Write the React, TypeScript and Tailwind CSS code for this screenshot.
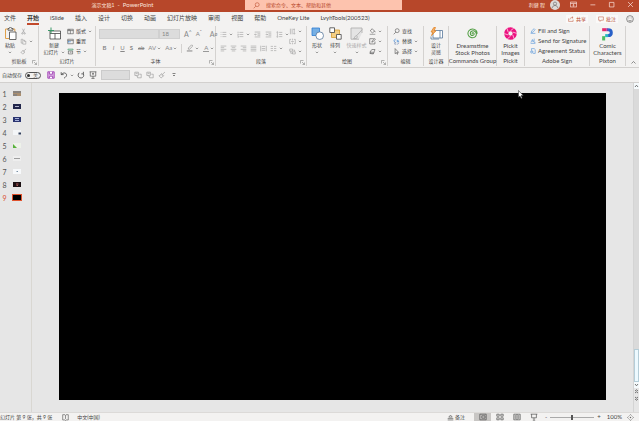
import { type ReactNode } from "react";
import clsx from "clsx";

interface IconProps {
  children: ReactNode;
  size?: string;
  box?: string;
  className?: string;
}

/** Small stroked drawing. The view box defaults to a 10-unit square. */
function Icon({ children, size = "size-[10px]", box = "0 0 10 10", className }: IconProps) {
  return (
    <svg
      viewBox={box}
      aria-hidden="true"
      fill="none"
      stroke="currentColor"
      strokeWidth="0.8"
      className={clsx("shrink-0", size, className)}
    >
      {children}
    </svg>
  );
}

function Chevron() {
  return (
    <Icon size="h-[3px] w-[4px]" box="0 0 4 3" className="text-[#888]">
      <path d="M.8.8 2 2 3.2.8" />
    </Icon>
  );
}

const glyphs = {
  cut: <path d="M3.4 1 6.3 7M6.6 1 3.7 7M2.4 7.8a1 1 0 1 0 2 0 1 1 0 1 0-2 0M5.6 7.8a1 1 0 1 0 2 0 1 1 0 1 0-2 0" />,
  copy: <path d="M4 3V1.8H1.7v5.5H4M4 3.2h2.6L8.3 5v3.8H4zM6.4 3.3V5h1.8" />,
  brush: <path d="M8.7 1.3 5.8 4M4.5 3.2l2.6 2.6-.8.8-2.6-2.6zM3.8 4.2C3 5.3 2.2 5.7 1.2 6l2.7 2.7c1.1-.5 1.8-1.3 2.3-2.2" />,
  layout: <path d="M1 1.8h8v6.4H1zM1 3.7h8M4.8 3.7v4.5M1.8 2.7h3" />,
  reset: <><path d="M1 1.8h8v6.4H1zM1 3.7h8" /><path stroke="#2b7cd3" d="M3 6.5 1.7 5.4 3 4.5M2 5.4h3.6" /></>,
  section: <><path d="M2 4.2h6v4.3H2zM4 6h2.4" /><path stroke="#3a9a68" d="M1.3 1.5h7.4v1.3H1.3z" /></>,
  bullets: <path d="M1 2h1M1 5h1M1 8h1M3.5 2H9M3.5 5H9M3.5 8H9" />,
  numbers: <path d="M1.5 1v2M1 4.5h1L1 6h1M1 7.5h1v1.5H1M3.5 2H9M3.5 5H9M3.5 8H9" />,
  outdent: <path d="M1 1.5h8M5 4h4M5 6h4M1 8.5h8M3.8 5H1M2.2 3.8 1 5l1.2 1.2" />,
  indent: <path d="M1 1.5h8M5 4h4M5 6h4M1 8.5h8M1 5h2.8M2.6 3.8 3.8 5 2.6 6.2" />,
  spacing: <path d="M2 1v8M1 2l1-1 1 1M1 8l1 1 1-1M4.5 2H9M4.5 5H9M4.5 8H9" />,
  left: <path d="M1 1.5h8M1 3.8h5M1 6.2h8M1 8.5h5" />,
  center: <path d="M1 1.5h8M2.5 3.8h5M1 6.2h8M2.5 8.5h5" />,
  right: <path d="M1 1.5h8M4 3.8h5M1 6.2h8M4 8.5h5" />,
  justify: <path d="M1 1.5h8M1 3.8h8M1 6.2h8M1 8.5h8" />,
  distribute: <path d="M1 1v8M9 1v8M2.5 2h5M2.5 5h5M2.5 7.5h5" />,
  columns: <path d="M1 2h3.3M1 5h3.3M1 8h3.3M5.7 2H9M5.7 5H9M5.7 8H9" />,
  direction: <path d="M2 1v8M4.5 1v8M7.5 1v7.8M6.2 7.5l1.3 1.3 1.3-1.3M6 2h2" />,
  alignBox: <path d="M3 2H1v6h2M7 2h2v6H7M5 1v2.5M5 6.5V9M3 5h4" />,
  smartArt: <path d="M1 1.5h4v3H1zM2.5 4.5v3H5M5 5.5h4v3H5zM6 3h2v2" />,
  fill: <><path d="M4.5 1 8 4.5 4.8 7 1.8 4zM8 4.5 9 6" /><path strokeWidth="1.3" stroke="#999" d="M1 9h8" /></>,
  outline: <path d="M7 1H1v7.5h7.5V5M4 6l.5-1.7L8.3.8l1 1L5.6 5.5z" />,
  effects: <><path d="m2 5 2-2.8h4.6L7 6.2H2.6z" /><path fill="#aaa" d="M2 5 1.3 7.8l4.8.7L7.3 6" /></>,
  find: <><circle cx="6" cy="3.8" r="2.8" /><path d="M4 6 1 9" /></>,
  replace: <><path stroke="#2b7cd3" d="M4 1.5C2 1.5 1.5 3 2 5M.8 3.8 2 5l1.2-1.2M6 2.5v3M6 4h2v1.5H6" /><path stroke="#5d78a8" d="M5.5 8.8c2 0 2.8-.8 2.8-2.3M4.5 6.5h-2v2.3h2" /></>,
  select: <path d="M3 .8v7.4l1.8-1.6L6 9l1-.5-1.2-2.3H8z" />,
  fillSign: <path stroke="#2b7cd3" d="M1 9h8M2 7.5l1-3 4-3.3 1.5 1.6L5 7z" />,
  sendSign: <path stroke="#2b7cd3" d="M1 9h8M1.5 7.5 4 2.5l1 3.8 1.3-2 .8 3H9M7 1v3.5" />,
  status: <path stroke="#2b7cd3" d="M2.5 4V1H7l1.7 1.7V9H5M1 6.5a2 2 0 1 0 4 0 2 2 0 1 0-4 0M3 5.5v1h1" />,
  undo: <path strokeWidth="1" d="M1.5 1.5v3h3M1.7 4.3C4 1.8 7 1.8 8 4c.8 2-.6 3.5-3 5" />,
  redo: <path strokeWidth="1" d="M8 1v2.6H5.4M2.7 2.2C.8 4 1 7.3 3.4 8.4s5-.4 5-3.1L8 3.7" />,
  present: <path d="M.8 1h8.4M1.6 1v5.5h6.8V1M5 6.5v2.7M3 9.2h4M5 2.2v2.6M3.8 3.5h2.4" />,
  pasteStyle: <path d="M1 1.5h4.5v4H1zM4.5 6.5V8.500H9V4H6.5M2 3h2.500M2.5 5.5 4 7.200" />,
};

type GlyphName = keyof typeof glyphs;

interface ToolProps {
  glyph: GlyphName;
  label: string;
  text?: boolean;
  menu?: boolean;
  muted?: boolean;
  size?: string;
  className?: string;
}

/** Icon button with an optional visible caption and menu arrow. */
function Tool({ glyph, label, text, menu, muted, size = "size-[7px]", className }: ToolProps) {
  return (
    <button
      type="button"
      aria-label={label}
      className={clsx(
        "flex h-[10px] shrink-0 items-center gap-[2px] whitespace-nowrap",
        muted ? "text-[#999]" : "text-[#444]",
        className,
      )}
    >
      <Icon size={size}>{glyphs[glyph]}</Icon>
      {text && <span>{label}</span>}
      {menu && <Chevron />}
    </button>
  );
}

interface BigButtonProps {
  icon: ReactNode;
  lines: string[];
  menu?: "below" | "inline";
  muted?: boolean;
  className?: string;
}

function BigButton({ icon, lines, menu, muted, className }: BigButtonProps) {
  return (
    <button
      type="button"
      className={clsx(
        "flex shrink-0 flex-col items-center whitespace-nowrap leading-[7px]",
        muted ? "text-[#aaa]" : "text-[#444]",
        className,
      )}
    >
      <span className="mb-px flex h-[15px] items-center">{icon}</span>
      {lines.map((line, i) => (
        <span key={line} className="flex items-center gap-[2px]">
          {line}
          {menu === "inline" && i === lines.length - 1 && <Chevron />}
        </span>
      ))}
      {menu === "below" && (
        <span className="flex h-[7px] items-center">
          <Chevron />
        </span>
      )}
    </button>
  );
}

interface GroupProps {
  label: string;
  width: string;
  launcher?: boolean;
  /** Latin captions are set one step larger than the Chinese ones. */
  latin?: boolean;
  children: ReactNode;
}

function Group({ label, width, launcher, latin, children }: GroupProps) {
  return (
    <section
      aria-label={label}
      className={clsx(
        "relative flex shrink-0 flex-col border-r border-[#d4d2d0]",
        latin ? "text-[6px]" : "text-[5px]",
        width,
      )}
    >
      <div className="flex h-[31px] justify-center">{children}</div>
      <div className="flex justify-center leading-[10px] whitespace-nowrap text-[#444]">{label}</div>
      {launcher && (
        <button type="button" aria-label={`${label} 设置`} className="absolute right-px bottom-px text-[#888]">
          <Icon size="size-[5px]">
            <path strokeWidth="1.2" d="M1 7V1h6M4 4l5 5M9 5v4H5" />
          </Icon>
        </button>
      )}
    </section>
  );
}

const tabs = ["文件", "开始", "iSlide", "插入", "设计", "切换", "动画", "幻灯片放映", "审阅", "视图", "帮助", "OneKey Lite", "LvyhTools(200523)"];

function TitleBar() {
  return (
    <header className="flex h-[12px] items-center bg-[#b7472a] pb-[3px] text-[#fbe3dc]">
      <h1 className="w-[245px] shrink-0 text-center whitespace-nowrap">
        <span className="text-[5px]">演示文稿1</span>&nbsp; -&nbsp; PowerPoint
      </h1>
      <label className="flex h-[10px] max-w-[157px] flex-1 items-center gap-[6px] self-start bg-[#fdc3ae] pl-[8px] text-[#b7472a]">
        <Icon size="size-[7px]">{glyphs.find}</Icon>
        <input
          type="search"
          aria-label="搜索"
          placeholder="搜索命令、文本、帮助和其他"
          className="min-w-0 flex-1 bg-transparent text-[5px] leading-[8px] outline-none placeholder:text-[#b7472a]"
        />
      </label>
      <span className="ml-auto text-[5px] whitespace-nowrap">利健 程</span>
      <span className="ml-[5px] flex size-[10px] shrink-0 items-center justify-center rounded-full bg-[#dedad8] text-[#666]">
        <Icon size="size-[8px]">
          <circle cx="5" cy="3.3" r="2" />
          <path d="M1.5 9c0-4.5 7-4.5 7 0" />
        </Icon>
      </span>
      <div className="ml-[10px] flex gap-[12px] pr-[5px]">
        <button type="button" aria-label="功能区显示选项">
          <Icon size="size-[7px]">
            <path strokeWidth="1" d="M.5 1.5h9v7h-9zM.5 3.5h9M5 8V5M3.7 6 5 4.8 6.3 6" />
          </Icon>
        </button>
        <button type="button" aria-label="最小化">
          <Icon size="size-[7px]"><path strokeWidth="1" d="M2 5.5h7" /></Icon>
        </button>
        <button type="button" aria-label="最大化">
          <Icon size="size-[7px]"><path strokeWidth="1" d="M2 2h6.5v6.5H2z" /></Icon>
        </button>
        <button type="button" aria-label="关闭">
          <Icon size="size-[7px]"><path strokeWidth="1" d="m1.5 1.5 7 7M8.5 1.5l-7 7" /></Icon>
        </button>
      </div>
    </header>
  );
}

function TabRow() {
  return (
    <nav aria-label="功能区" className="flex h-[13px] items-stretch pl-[4px]">
      <ul className="flex gap-[11px]">
        {tabs.map((tab) => (
          <li key={tab} className="flex">
            <a
              href="#"
              aria-current={tab === "开始" ? "page" : undefined}
              className={clsx(
                "border-b-2 leading-[12px] whitespace-nowrap",
                tab === "开始" ? "border-[#c2492b] font-bold text-[#333]" : "border-transparent",
              )}
            >
              {tab}
            </a>
          </li>
        ))}
      </ul>
      <div className="ml-auto flex items-center gap-[8px] pr-[5px] text-[5px] text-[#b7472a]">
        <button type="button" className="flex items-center gap-[2px] bg-[#faf9f8] px-[2px] leading-[8px]">
          <Icon size="size-[6px]"><path d="M1 4v5h7.5V6M3 6c.5-3 2.5-3.5 5-3.5M6.5.8l2 1.700-2 1.800" /></Icon>
          共享
        </button>
        <button type="button" className="flex items-center gap-[2px] bg-[#faf9f8] px-[2px] leading-[8px]">
          <Icon size="size-[6px]"><path d="M1 1.5h8V7H5L3.5 9V7H1z" /></Icon>
          批注
        </button>
        <button type="button" aria-label="反馈" className="text-[#555]">
          <Icon size="size-[8px]">
            <circle cx="5" cy="5" r="4.2" />
            <path d="M3.5 3.2v1M6.5 3.2v1M2.8 6c1 2 3.4 2 4.4 0" />
          </Icon>
        </button>
      </div>
    </nav>
  );
}

function Divider() {
  return <span className="h-[9px] w-px bg-[#d4d2d0]" />;
}

function FontGroup() {
  return (
    <Group label="字体" width="w-[120px]" launcher>
      <div className="flex min-w-0 flex-1 flex-col gap-[4px] pt-[3px] pl-[3px] text-[6px] leading-[10px] text-[#888]">
        <div className="flex items-center gap-[4px]">
          <div className="flex">
            <select disabled aria-label="字体" className="h-[10px] w-[60px] appearance-none border border-[#d0d0d0] bg-[#dcdcdc]" />
            <select disabled aria-label="字号" className="h-[10px] w-[21px] appearance-none border border-[#d0d0d0] bg-[#dcdcdc] pl-[2px] leading-[8px]">
              <option>18</option>
            </select>
          </div>
          <button type="button" aria-label="增大字号" className="flex text-[7px]">A<span className="text-[5px] leading-[6px]">^</span></button>
          <button type="button" aria-label="减小字号" className="flex">A<span className="text-[5px] leading-[6px]">ˇ</span></button>
          <Divider />
          <button type="button" aria-label="清除格式" className="flex text-[7px]">A<span className="text-[5px]">ø</span></button>
        </div>
        <div className="flex items-center gap-[4px] pl-[3px]">
          <button type="button" className="w-[5px] font-bold">B</button>
          <button type="button" className="w-[5px] italic">I</button>
          <button type="button" className="w-[5px] underline">U</button>
          <button type="button" className="w-[5px] font-bold">S</button>
          <button type="button" className="line-through">ab</button>
          <button type="button" className="flex items-center gap-px">AV<Chevron /></button>
          <button type="button" className="flex items-center gap-px">Aa<Chevron /></button>
          <Divider />
          <button type="button" aria-label="突出显示" className="flex items-center gap-px">
            <Icon size="size-[8px]">
              <path d="m3 5 4-4 1.5 1.5-4 4H3z" />
              <path strokeWidth="1.3" d="M1 8.7h7" />
            </Icon>
            <Chevron />
          </button>
          <button type="button" aria-label="字体颜色" className="flex items-center gap-px">
            <span className="w-[6px] border-b border-[#999] leading-[7px]">A</span>
            <Chevron />
          </button>
        </div>
      </div>
    </Group>
  );
}

function ParagraphGroup() {
  return (
    <Group label="段落" width="w-[91px]" launcher>
      <div className="flex min-w-0 flex-1 flex-col gap-[4px] pt-[3px] pl-[4px]">
        <div className="flex gap-[4px]">
          <Tool glyph="bullets" label="项目符号" menu muted />
          <Tool glyph="numbers" label="编号" menu muted />
          <Tool glyph="outdent" label="降低级别" muted />
          <Tool glyph="indent" label="提高级别" muted />
          <Tool glyph="spacing" label="行距" menu muted />
        </div>
        <div className="flex gap-[3px]">
          <Tool glyph="left" label="左对齐" muted />
          <Tool glyph="center" label="居中" muted />
          <Tool glyph="right" label="右对齐" muted />
          <Tool glyph="justify" label="两端对齐" muted />
          <Tool glyph="distribute" label="分散对齐" muted />
          <Tool glyph="columns" label="分栏" menu muted />
        </div>
      </div>
      <div className="w-[17px]">
        <Tool glyph="direction" label="文字方向" menu muted />
        <Tool glyph="alignBox" label="对齐文本" menu muted />
        <Tool glyph="smartArt" label="转换为 SmartArt" menu muted />
      </div>
    </Group>
  );
}

function Ribbon() {
  return (
    <div className="flex h-[43px] border-b border-[#d2d0ce] pt-px pb-px">
      <Group label="剪贴板" width="w-[39px]" launcher>
        <BigButton
          lines={["粘贴"]}
          menu="below"
          className="w-[20px]"
          icon={
            <Icon size="size-[13px]" box="0 0 13 13">
              <path stroke="#e0a04a" strokeWidth="1" d="M4 2H1.5v9.5H5M9 2h1.8v2.5" />
              <path d="M4 3.2V1.5h1.2a1.2 1.2 0 0 1 2.4 0H9v1.7z" />
              <path fill="#fff" d="M5.5 5H12v7.5H5.5z" />
            </Icon>
          }
        />
        <div className="w-[18px]">
          <Tool glyph="cut" label="剪切" muted />
          <Tool glyph="copy" label="复制" menu muted />
          <Tool glyph="brush" label="格式刷" muted />
        </div>
      </Group>
      <Group label="幻灯片" width="w-[57px]">
        <BigButton
          lines={["新建", "幻灯片"]}
          menu="inline"
          className="w-[26px]"
          icon={
            <Icon size="size-[13px]" box="0 0 13 13">
              <path fill="#fff" d="M2 4h10.5v8H2z" />
              <path d="M2 6.5h10.5M7 6.5V12" />
              <path stroke="#3a9a68" strokeWidth="1" d="M3 .5v6M0 3.5h6" />
            </Icon>
          }
        />
        <div className="w-[26px]">
          <Tool glyph="layout" label="版式" text menu />
          <Tool glyph="reset" label="重置" text />
          <Tool glyph="section" label="节" text menu />
        </div>
      </Group>
      <FontGroup />
      <ParagraphGroup />
      <Group label="绘图" width="w-[81px]" launcher>
        <BigButton
          lines={["形状"]}
          menu="below"
          className="w-[18px]"
          icon={
            <Icon size="size-[13px]" box="0 0 13 13">
              <path fill="#75afe4" stroke="#2b7cd3" d="M1 1h7.5v7.5H1z" />
              <circle cx="8.700" cy="8.700" r="3.800" fill="#fff" stroke="#57779b" />
            </Icon>
          }
        />
        <BigButton
          lines={["排列"]}
          menu="below"
          className="w-[18px]"
          icon={
            <Icon size="size-[13px]" box="0 0 13 13">
              <path fill="#f5cf83" stroke="#d69a2d" d="M2.5 3h8v7.500h-8z" />
              <path fill="#fff" d="M.8.8h4.700v4.700H.8zM7.500 7.500h4.700v4.700H7.500z" />
            </Icon>
          }
        />
        <BigButton
          lines={["快速样式"]}
          menu="below"
          muted
          className="w-[25px]"
          icon={
            <Icon size="size-[13px]" box="0 0 13 13">
              <path fill="#e4e4e4" d="M9 12.2H1V1h11v5" />
              <path d="M12.3 2.5 6.5 8.8M6.5 8.8c-2 0-1.5 2-3 2.7 2 .5 4 0 3.8-2z" />
            </Icon>
          }
        />
        <div className="w-[17px]">
          <Tool glyph="fill" label="形状填充" menu />
          <Tool glyph="outline" label="形状轮廓" menu />
          <Tool glyph="effects" label="形状效果" menu />
        </div>
      </Group>
      <Group label="编辑" width="w-[36px]">
        <div className="flex-1 pl-[5px]">
          <Tool glyph="find" label="查找" text />
          <Tool glyph="replace" label="替换" text menu />
          <Tool glyph="select" label="选择" text menu />
        </div>
      </Group>
      <Group label="设计器" width="w-[25px]">
        <BigButton
          lines={["设计", "灵感"]}
          icon={
            <Icon size="size-[13px]" box="0 0 13 13">
              <path fill="#fff" stroke="#57779b" d="M3 3.5h9.5V11H3zM10 3.5V11M1 9.5V12h8" />
              <path fill="#f7b267" stroke="#e08428" d="M3.8.5 1 5h2L1.5 8.5 6 3.800H4L5.500.5z" />
            </Icon>
          }
        />
      </Group>
      <Group label="Commands Group" width="w-[48px]" latin>
        <BigButton
          lines={["Dreamstime", "Stock Photos"]}
          icon={
            <Icon size="size-[11px]" box="0 0 12 12" className="text-[#4d9c3f]">
              <path
                strokeWidth="1.1"
                d="M6.200 6.500C5.500 6.600 5.300 5.500 6.200 5.200 7.500 4.800 8.300 6.500 7.300 7.600 6 9 3.700 8 3.600 6.100 3.500 3.700 6 2.500 8 3.300c2.700 1.200 2.800 4.700.8 6.300C6.200 11.600 2.300 10.600 1.300 7.500.2 4 2.800 1 6 1c3.200 0 5.200 2.500 5 5.200"
              />
            </Icon>
          }
        />
      </Group>
      <Group label="Pickit" width="w-[28px]" latin>
        <BigButton
          lines={["Pickit", "Images"]}
          icon={
            <Icon size="size-[13px]" box="0 0 12 12">
              <circle cx="6" cy="6" r="3.900" stroke="#ec1380" strokeWidth="3.800" />
              <path
                stroke="#fff"
                strokeWidth=".6"
                d="M6 3.500 9 1M8.100 4.700l3.700 1.200M8.100 7.300 9.400 11M6 8.500 3 11M3.900 7.300.2 6.100M3.900 4.700 2.600 1"
              />
            </Icon>
          }
        />
      </Group>
      <Group label="Adobe Sign" width="w-[65px]" latin>
        <div className="flex-1 pl-[5px]">
          <Tool glyph="fillSign" label="Fill and Sign" text size="size-[6px]" />
          <Tool glyph="sendSign" label="Send for Signature" text size="size-[6px]" />
          <Tool glyph="status" label="Agreement Status" text size="size-[6px]" />
        </div>
      </Group>
      <Group label="Pixton" width="w-[36px]" latin>
        <BigButton
          lines={["Comic", "Characters"]}
          icon={
            <Icon size="size-[14px]" box="0 0 13 13">
              <path stroke="#e8286b" strokeWidth="2.800" d="M2 2.500h4" />
              <path stroke="#7a3eb1" strokeWidth="2.800" d="M6 2.500h1.500" />
              <path stroke="#2860c8" strokeWidth="2.800" d="M7.500 2.500c4 0 4 5.500 0 5.500" />
              <path stroke="#25b7c4" strokeWidth="2.800" d="M7.500 8H4.800" />
              <path stroke="#4dbd63" strokeWidth="2.800" d="M3.400 8.500v4" />
            </Icon>
          }
        />
      </Group>
      <button type="button" aria-label="折叠功能区" className="ml-auto self-end pr-[3px] pb-px text-[#555]">
        <Icon size="size-[5px]"><path strokeWidth="1.3" d="m1 7 4-4 4 4" /></Icon>
      </button>
    </div>
  );
}

function QuickAccess() {
  return (
    <div className="flex h-[15px] items-center border-b border-[#d2d0ce] pl-[2px] text-[#666]">
      <label className="flex items-center gap-[3px]">
        <span className="text-[5px] whitespace-nowrap text-[#444]">自动保存</span>
        <span className="relative flex h-[7px] w-[16px] items-center justify-end rounded-full border border-[#555] pr-[2px] text-[5px] leading-[5px]">
          <input
            type="checkbox"
            className="absolute left-px size-[3px] appearance-none rounded-full bg-[#333]"
          />
          关
        </span>
      </label>
      <button type="button" aria-label="保存" className="ml-[6px] text-[#a448b8]">
        <Icon size="size-[8px]">
          <path fill="#dfb8e6" strokeWidth="1.2" d="M1 1h8v8H1z" />
          <path strokeWidth="1.2" fill="#fff" d="M3 1v3h4V1M3 9V6.5h4V9" />
        </Icon>
      </button>
      <Tool glyph="undo" label="撤消" menu size="size-[8px]" className="ml-[5px]" />
      <Tool glyph="redo" label="重做" size="size-[8px]" className="ml-[3px]" />
      <Tool glyph="present" label="从头开始" size="size-[8px]" className="ml-[4px]" />
      <select disabled aria-label="主题字体" className="ml-[4px] h-[10px] w-[29px] appearance-none border border-[#cbcbcb] bg-[#dcdcdc]" />
      <Tool glyph="pasteStyle" label="上移一层" muted size="size-[8px]" className="ml-[4px]" />
      <Tool glyph="pasteStyle" label="下移一层" muted size="size-[8px]" className="ml-[4px]" />
      <Tool glyph="brush" label="格式刷" muted size="size-[8px]" className="ml-[4px]" />
      <button type="button" aria-label="自定义快速访问工具栏" className="ml-[6px]">
        <Icon size="size-[4px]" box="0 0 4 4"><path d="M.5.5h3M1 2l1 1 1-1" /></Icon>
      </button>
    </div>
  );
}

const thumbnails: { fill: string; art: ReactNode }[] = [
  { fill: "bg-[#a98e70]", art: <path stroke="#5c7396" d="M0 1h8M0 4h4" /> },
  { fill: "bg-[#22264b]", art: <path stroke="#d9dcf0" d="M2 2.5h4" /> },
  { fill: "bg-[#2a3470]", art: <path stroke="#c6d0f2" d="M2 1.5h4M2 3.5h4" /> },
  { fill: "bg-[#f4f6f8]", art: <path stroke="#33415c" strokeWidth="2" d="M5.5 3.5H8" /> },
  { fill: "bg-[#eef2ea]", art: <path stroke="none" fill="#58b13c" d="M0 5V1l4 4z" /> },
  { fill: "bg-[#eeeeee]", art: <path stroke="#888" d="M1 2.5h6" /> },
  { fill: "bg-[#f7f9fb]", art: <path stroke="#5b7690" d="M3.5 2.5H5" /> },
  { fill: "bg-[#1a0f12]", art: <path stroke="#d06a6a" d="M3 2h2.5M3.5 3.5H5" /> },
  { fill: "bg-black", art: null },
];

function SlidePane() {
  return (
    <ol className="flex w-[32px] shrink-0 flex-col border-r border-[#d9d7d2] pt-[4px]">
      {thumbnails.map(({ fill, art }, i) => {
        const active = i === thumbnails.length - 1;
        return (
          <li key={i}>
            <button
              type="button"
              aria-label={`幻灯片 ${i + 1}`}
              className={clsx("flex h-[13px] items-center text-[7px]", active ? "text-[#d8502f]" : "text-[#555]")}
            >
              <span className="w-[12px] pr-[3px]">{i + 1}</span>
              <span className={clsx("flex border", active ? "border-[#e0532f]" : "border-transparent")}>
                <Icon size="h-[5px] w-[8px]" box="0 0 8 5" className={fill}>{art}</Icon>
              </span>
            </button>
          </li>
        );
      })}
    </ol>
  );
}

function ScrollBar() {
  return (
    <div className="flex w-[6px] shrink-0 flex-col items-center border-l border-[#d4d4d4] text-[#555]">
      <button type="button" aria-label="向上滚动" className="bg-[#f5fafc] py-px">
        <Icon size="h-[4px] w-[5px]" box="0 0 5 4"><path d="M1 3 2.5 1.2 4 3" /></Icon>
      </button>
      <div className="flex w-full flex-1 flex-col justify-end bg-[#dadada]">
        <div className="h-[33px] border border-[#b5cdd8] bg-[#edf9fe]" />
      </div>
      <button type="button" aria-label="向下滚动" className="bg-[#f5fafc] py-px">
        <Icon size="h-[4px] w-[5px]" box="0 0 5 4"><path d="M1 1 2.5 2.8 4 1" /></Icon>
      </button>
      <button type="button" aria-label="上一张幻灯片" className="py-px">
        <Icon size="size-[5px]" box="0 0 5 5"><path d="M1 2 2.5.8 4 2M1 4l1.5-1.2L4 4" /></Icon>
      </button>
      <button type="button" aria-label="下一张幻灯片" className="mb-[10px] py-px">
        <Icon size="size-[5px]" box="0 0 5 5"><path d="M1 1l1.5 1.2L4 1M1 3l1.5 1.2L4 3" /></Icon>
      </button>
    </div>
  );
}

function StatusBar() {
  return (
    <footer className="flex h-[9px] items-center overflow-hidden border-t border-[#dcdad8] text-[5px] leading-[8px] whitespace-nowrap text-[#444]">
      <span>幻灯片 第 9 张，共 9 张</span>
      <Icon size="size-[7px]" className="ml-[10px]"><path d="M1 1h3l1 1 1-1h3v7.5H6l-1 .7-1-.7H1zM5 2v5" /></Icon>
      <span className="ml-[8px]">中文(中国)</span>
      <button type="button" className="ml-auto flex items-center gap-px">
        <Icon size="size-[7px]"><path d="m2.5 4.5 2.500-3 2.500 3zM1 6.5h8M1 8.5h8" /></Icon>
        备注
      </button>
      <div className="ml-[9px] flex">
        <button type="button" aria-label="普通视图" className="flex w-[17px] justify-center bg-[#c8c6c4]">
          <Icon size="size-[8px]"><path d="M1 1.5h8v7H1zM3.5 3.5h4v3h-4z" /></Icon>
        </button>
        <button type="button" aria-label="幻灯片浏览" className="flex w-[17px] justify-center">
          <Icon size="size-[8px]"><path d="M1 1.5h3V4H1zM6 1.5h3V4H6zM1 6h3v2.5H1zM6 6h3v2.5H6z" /></Icon>
        </button>
        <button type="button" aria-label="阅读视图" className="flex w-[17px] justify-center">
          <Icon size="size-[8px]"><path d="M1 1.5h8v7H1zM5 1.5v7M2 3.5h2M2 5h2M2 6.5h2M6 3.500h2M6 5h2M6 6.5h2" /></Icon>
        </button>
        <button type="button" aria-label="幻灯片放映" className="flex w-[17px] justify-center">
          <Icon size="size-[8px]"><path d="M.8 1.5h8.4M2 1.5V6h6V1.5M5 6v2.5M3.5 9h3" /></Icon>
        </button>
      </div>
      <button type="button" aria-label="缩小" className="ml-[3px] text-[6px]">-</button>
      <input
        type="range"
        aria-label="显示比例"
        defaultValue={50}
        className="mx-[3px] h-px w-[44px] appearance-none bg-[#aaa] [&::-webkit-slider-thumb]:h-[5px] [&::-webkit-slider-thumb]:w-[2px] [&::-webkit-slider-thumb]:appearance-none [&::-webkit-slider-thumb]:bg-[#555]"
      />
      <button type="button" aria-label="放大" className="text-[6px]">+</button>
      <span className="ml-[6px] text-[6px]">100%</span>
      <button type="button" aria-label="适应窗口" className="mr-[5px] ml-[5px]">
        <Icon size="size-[7px]"><path d="M3.5 2.3 5 .8l1.5 1.5M7.7 3.5 9.2 5 7.7 6.5M6.5 7.7 5 9.2 3.5 7.7M2.3 6.5.8 5l1.5-1.5M5 4v2M4 5h2" /></Icon>
      </button>
    </footer>
  );
}

export default function App() {
  return (
    <div className="relative flex min-h-screen flex-col bg-[#f3f2f1] font-[Lato,'Noto_Sans_CJK_SC',sans-serif] text-[6px] leading-[8px] text-[#444]">
      <TitleBar />
      <TabRow />
      <Ribbon />
      <QuickAccess />
      <main className="flex flex-1 bg-[#e6e6e6]">
        <SlidePane />
        <div className="flex flex-1 px-[27px] pt-[10px] pb-[12px]">
          <div className="flex-1 bg-black" />
        </div>
        <ScrollBar />
      </main>
      <StatusBar />
      <svg viewBox="0 0 6 9" aria-hidden="true" className="absolute top-[90px] left-[518px] h-[9px] w-[6px]">
        <path fill="#fff" stroke="#222" strokeWidth=".5" d="M.5.5v6.800L2 6l1.200 2.500 1-.5L3 5.600h2.300z" />
      </svg>
    </div>
  );
}
